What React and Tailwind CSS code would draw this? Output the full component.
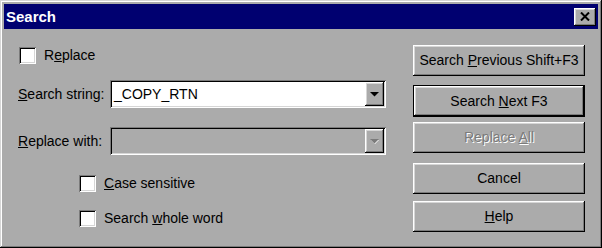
import React from "react";

const raised =
  "shadow-[inset_-1px_-1px_0_#000,inset_1px_1px_0_#fff,inset_-2px_-2px_0_#7b7b7b,inset_2px_2px_0_#d6d6d6]";
const sunken =
  "shadow-[inset_1px_1px_0_#7b7b7b,inset_-1px_-1px_0_#fff,inset_2px_2px_0_#000,inset_-2px_-2px_0_#d6d6d6]";

function Checkbox({ label, ml }) {
  return (
    <div className={`flex items-center h-[23px] ${ml}`}>
      <div className={`w-[17px] h-[17px] bg-white ${sunken}`} />
      <span className="ml-[8px]">{label}</span>
    </div>
  );
}

function Combo({ value, disabled }) {
  return (
    <div
      className={`relative w-[276px] h-[28px] flex items-center ${sunken} ${
        disabled ? "bg-[#ababab]" : "bg-white"
      }`}
    >
      <span className="ml-[4px]">{value}</span>
      <div
        className={`absolute right-[2px] top-[2px] w-[19px] h-[24px] bg-[#ababab] flex items-center justify-center ${raised}`}
      >
        <svg width="9" height="5" viewBox="0 0 9 5">
          {disabled && <path d="M1 1h8L5 5z" fill="#fff" />}
          <path d="M0 0h9L4.5 4.5z" fill={disabled ? "#7b7b7b" : "#000"} />
        </svg>
      </div>
    </div>
  );
}

function Btn({ children, mt, def, disabled }) {
  const inner = (
    <div
      className={`w-full h-full flex items-center justify-center ${raised} ${
        disabled ? "text-[#7b7b7b] [text-shadow:1px_1px_0_#fff]" : "text-black"
      }`}
    >
      <span>{children}</span>
    </div>
  );
  if (def)
    return (
      <div className={`w-[172px] h-[32px] border border-black ${mt}`}>{inner}</div>
    );
  return <div className={`w-[172px] h-[31px] ${mt}`}>{inner}</div>;
}

export default function App() {
  return (
    <div
      className="w-[602px] h-[248px] bg-[#ababab] p-[4px] flex flex-col text-[14px] text-black shadow-[inset_-1px_-1px_0_#000,inset_1px_1px_0_#d6d6d6,inset_-2px_-2px_0_#7b7b7b,inset_2px_2px_0_#fff]"
      style={{ fontFamily: '"Liberation Sans", Arial, sans-serif' }}
    >
      <div className="h-[25px] bg-[#000070] flex items-center justify-between pl-[2px] pr-[2px]">
        <span className="text-white font-bold text-[15px] leading-none">Search</span>
        <div className={`w-[22px] h-[18px] bg-[#ababab] flex items-center justify-center ${raised}`}>
          <svg width="10" height="9" viewBox="0 0 10 9">
            <path d="M1 0.5L9 8.5M9 0.5L1 8.5" stroke="#000" strokeWidth="2" />
          </svg>
        </div>
      </div>
      <div className="flex flex-1">
        <div className="w-[409px] pl-[15px] flex flex-col">
          <div className="mt-[15px]">
            <Checkbox label={<>R<u>e</u>place</>} ml="" />
          </div>
          <div className="mt-[13px] flex items-center">
            <span className="w-[92px] -ml-[1px]">
              <u>S</u>earch string:
            </span>
            <Combo value="_COPY_RTN" />
          </div>
          <div className="mt-[19px] flex items-center">
            <span className="w-[92px] -ml-[1px]">
              <u>R</u>eplace with:
            </span>
            <Combo value="" disabled />
          </div>
          <div className="mt-[17px]">
            <Checkbox label={<><u>C</u>ase sensitive</>} ml="ml-[60px]" />
          </div>
          <div className="mt-[12px]">
            <Checkbox label={<>Search <u>w</u>hole word</>} ml="ml-[60px]" />
          </div>
        </div>
        <div className="flex flex-col">
          <Btn mt="mt-[16px]">
            Search <u>P</u>revious Shift+F3
          </Btn>
          <Btn mt="mt-[9px]" def>
            Search <u>N</u>ext F3
          </Btn>
          <Btn mt="mt-[5px]" disabled>
            Replace <u>A</u>ll
          </Btn>
          <Btn mt="mt-[10px]">Cancel</Btn>
          <Btn mt="mt-[7px]">
            <u>H</u>elp
          </Btn>
        </div>
      </div>
    </div>
  );
}
